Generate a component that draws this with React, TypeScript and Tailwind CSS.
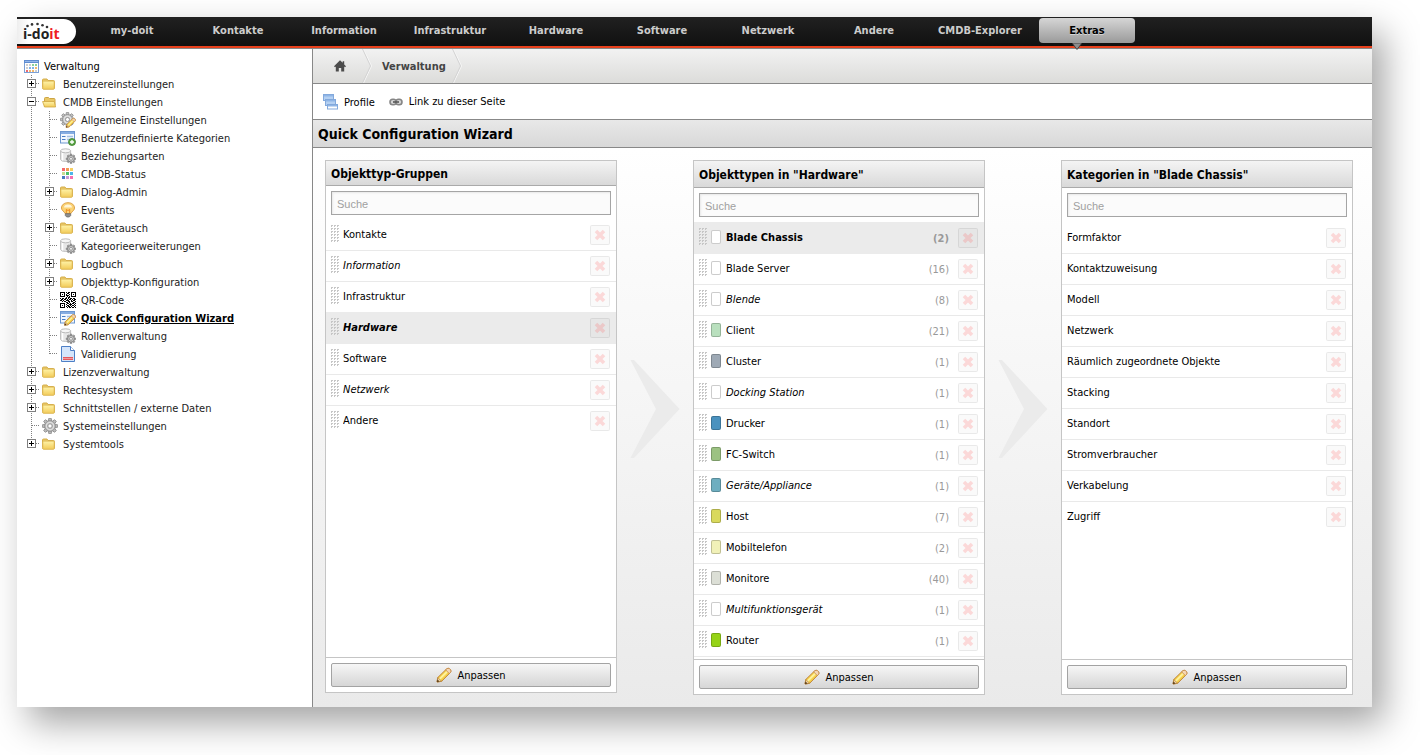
import type { ReactNode } from "react";

const BOX = "block h-4 w-4 shrink-0";

/* ---------- icons ---------- */

function Folder({ open = false }: { open?: boolean }) {
  return (
    <svg viewBox="0 0 16 16" className={BOX} aria-hidden="true">
      <defs>
        <linearGradient id="folderFill" x1="0" y1="0" x2="0" y2="1">
          <stop offset="0" stopColor="#fff3a8" />
          <stop offset="1" stopColor="#f2cb58" />
        </linearGradient>
      </defs>
      {open ? (
        <>
          <path d="M2.500 12.500V4.500q0-1 1-1h3l1 1H12q1 0 1 1v6" fill="#e9c765" stroke="#cda544" />
          <path d="M.6 7.500h11.600l1.400 5.500H2.500z" fill="url(#folderFill)" stroke="#cfa640" strokeWidth=".8" strokeLinejoin="round" />
        </>
      ) : (
        <>
          <path d="M.5 11.500V4q0-1 1-1H5l1 1.500h5.500q1 0 1 1v6.500q0 1-1 1h-10q-1 0-1-1z" fill="#e9c765" stroke="#d5ae4c" />
          <rect x=".9" y="5.200" width="11.200" height="8" rx=".8" fill="url(#folderFill)" stroke="#e0ba58" strokeWidth=".7" />
        </>
      )}
    </svg>
  );
}

function GearShape({ x, y, r, fill = "#b9b9b9", stroke = "#808080" }: { x: number; y: number; r: number; fill?: string; stroke?: string }) {
  const teeth = [0, 45, 90, 135, 180, 225, 270, 315];
  return (
    <g transform={`translate(${x} ${y}) scale(${r / 8})`}>
      {teeth.map((a) => (
        <path key={a} transform={`rotate(${a})`} d="M-1.700-5l.5-2.800h2.400L1.700-5z" fill={fill} stroke={stroke} strokeWidth=".9" />
      ))}
      <circle r="5.400" fill={fill} stroke={stroke} strokeWidth=".8" />
      <circle r="3.700" fill="none" stroke="#fff" strokeOpacity=".5" strokeWidth="1.200" />
      <circle r="2.200" fill="#fff" stroke={stroke} strokeWidth=".9" />
    </g>
  );
}

function PencilShape() {
  return (
    <>
      <path d="M1 15l.8-4.500L10.600 1.900q1.400-1.200 2.800-.3l1.200 1.200q.9 1.400-.3 2.800L5.600 14.300z" fill="#f6d14a" stroke="#b9782c" strokeWidth=".9" strokeLinejoin="round" />
      <path d="M3.600 12.200l8.200-8.200" stroke="#fdf2a0" strokeWidth="1.800" />
      <path d="M10.600 1.900q1.400-1.200 2.800-.3l1.200 1.200q.9 1.400-.3 2.800l-1 1-3.600-3.700z" fill="#f5d6b4" stroke="#c48a4c" strokeWidth=".8" />
      <path d="M1 15l.8-4.500 3.800 3.800z" fill="#f1d2a2" stroke="#a8742a" strokeWidth=".6" />
      <path d="M1 15l.5-2.500 2 2z" fill="#4d3310" />
    </>
  );
}

function Pencil() {
  return (
    <svg viewBox="0 0 16 16" className={BOX} aria-hidden="true">
      <PencilShape />
    </svg>
  );
}

function CalendarIcon() {
  const colors = ["#cfcfcf", "#cfcfcf", "#8bcf9a", "#8bcf9a", "#cfcfcf", "#7db4ea", "#7db4ea", "#f3b76b", "#ec6a72", "#f3b76b", "#f3b76b", "#cfcfcf"];
  return (
    <svg viewBox="0 0 16 16" className={BOX} aria-hidden="true">
      <rect x=".5" y="2.500" width="14" height="12" fill="#fff" stroke="#7ba0d6" />
      <rect x="0" y="2" width="15" height="3" fill="#5f8cd0" />
      <rect x="1" y="3" width="13" height="1" fill="#94b7ea" />
      {colors.map((c, i) => (
        <rect key={i} x={2 + (i % 4) * 3} y={6 + Math.floor(i / 4) * 3} width="2" height="2" fill={c} />
      ))}
    </svg>
  );
}

function GearPencilIcon() {
  return (
    <svg viewBox="0 0 16 16" className={BOX} aria-hidden="true">
      <GearShape x={7.500} y={7.500} r={7.300} fill="#c2c2c2" stroke="#8d8d8d" />
      <g transform="translate(5.500 5.500) scale(.66)">
        <PencilShape />
      </g>
    </svg>
  );
}

function FormShape() {
  return (
    <>
      <rect x=".5" y="1.500" width="14" height="11.500" fill="#f2f7fd" stroke="#6d97cf" />
      <rect x="1" y="2" width="13" height="2" fill="#86ade2" />
      <path d="M2 6.500h3.500M2 9.500h3.500" stroke="#4a7dc4" />
      <path d="M7 6.500h6M7 9.500h6" stroke="#a3bfe4" strokeWidth="1.400" />
    </>
  );
}

function FormAddIcon() {
  return (
    <svg viewBox="0 0 16 16" className={BOX} aria-hidden="true">
      <FormShape />
      <circle cx="12" cy="12" r="3.500" fill="#5aa746" stroke="#3c7f2c" strokeWidth=".8" />
      <path d="M12 10v4M10 12h4" stroke="#fff" strokeWidth="1.300" />
    </svg>
  );
}

function FormEditIcon() {
  return (
    <svg viewBox="0 0 16 16" className={BOX} aria-hidden="true">
      <FormShape />
      <g transform="translate(3.800 3.600) scale(.78)">
        <PencilShape />
      </g>
    </svg>
  );
}

function DatabaseGearIcon() {
  return (
    <svg viewBox="0 0 16 16" className={BOX} aria-hidden="true">
      <path d="M.6 2.800v8.600q0 2 5 2t5-2V2.800z" fill="#e6e6e6" stroke="#b5b5b5" strokeWidth=".9" />
      <path d="M2.500 4.500v8" stroke="#fff" strokeWidth="1.500" />
      <ellipse cx="5.600" cy="2.800" rx="5" ry="2" fill="#f6f6f6" stroke="#b5b5b5" strokeWidth=".9" />
      <GearShape x={11} y={10.800} r={4.900} fill="#a9a9a9" stroke="#737373" />
    </svg>
  );
}

function StatusGridIcon() {
  const colors = ["#f4696b", "#f29a54", "#f5cf62", "#c8dc94", "#4cc06c", "#4cb4ea", "#4a7abf", "#c99ad8", "#f56fb0"];
  return (
    <svg viewBox="0 0 16 16" className={BOX} aria-hidden="true">
      {colors.map((c, i) => (
        <rect key={i} x={2 + (i % 3) * 4} y={2 + Math.floor(i / 3) * 4} width="3" height="3" fill={c} />
      ))}
    </svg>
  );
}

function BulbIcon() {
  return (
    <svg viewBox="0 0 16 16" className={BOX} aria-hidden="true">
      <path d="M8 .7c4 0 6.500 2.300 6.500 5.300 0 2.600-2.800 3.300-3.500 5.500H5C4.300 9.300 1.500 8.600 1.500 6 1.500 3 4 .7 8 .7z" fill="#fbd375" stroke="#d99a3a" strokeWidth=".9" />
      <path d="M4 5.500C4 3.500 5.800 2.500 8 2.500s4 1 4 3z" fill="#fff6d8" />
      <path d="M6.300 11V7.500l1.700 1 1.700-1V11" fill="none" stroke="#f08c1e" />
      <path d="M5.300 11.700h5.400v1.800L9.300 15H6.700l-1.400-1.500z" fill="#8f8f8f" stroke="#666" strokeWidth=".7" />
    </svg>
  );
}

function QrIcon() {
  const rows = [
    "1111101011011111",
    "1000100110010001",
    "1010101001010101",
    "1000101110010001",
    "1111100101011111",
    "0000001011000000",
    "1011011010110110",
    "0110110101101011",
    "1101001110010110",
    "0010110011011001",
    "0000001101000110",
    "1111100110101101",
    "1000101001110010",
    "1010100110101101",
    "1000101011010010",
    "1111100101101101",
  ];
  return (
    <svg viewBox="0 0 16 16" className={BOX} shapeRendering="crispEdges" aria-hidden="true">
      {rows.map((row, y) => row.split("").map((v, x) => (v === "1" ? <rect key={`${x}-${y}`} x={x} y={y} width="1" height="1" fill="#000" /> : null)))}
    </svg>
  );
}

function DocumentIcon() {
  return (
    <svg viewBox="0 0 16 16" className={BOX} aria-hidden="true">
      <path d="M1.500.5h9l4 4v11h-13z" fill="#d5e5fa" stroke="#4d7fc6" />
      <path d="M10.500.5v4h4" fill="#fff" stroke="#4d7fc6" />
      <rect x="3" y="11" width="10" height="3" fill="#f29a9c" />
      <path d="M3 11.500h10M3 13.500h10" stroke="#e3585c" />
    </svg>
  );
}

function GearIcon() {
  return (
    <svg viewBox="0 0 16 16" className={BOX} aria-hidden="true">
      <GearShape x={8} y={8} r={7.900} fill="#bdbdbd" stroke="#8f8f8f" />
    </svg>
  );
}

function WindowsIcon() {
  return (
    <svg viewBox="0 0 16 16" className={BOX} aria-hidden="true">
      {[
        [0, 0],
        [2, 5],
        [4, 10],
      ].map(([x, y], i) => (
        <g key={i} transform={`translate(${x} ${y})`}>
          <rect x=".5" y=".5" width="10" height={i === 2 ? 4.500 : 6} fill={i === 2 ? "#fff" : "#b4d0f2"} stroke="#83a9dc" />
          <rect x="1" y="1" width="9" height="1.500" fill="#8fb5e6" />
        </g>
      ))}
    </svg>
  );
}

function ChainIcon() {
  return (
    <svg viewBox="0 0 14 8" className="block h-2 w-3.5 shrink-0" aria-hidden="true">
      <rect x="1" y="1.200" width="6.200" height="5.600" rx="2.800" fill="#d4d4d4" stroke="#858585" strokeWidth="1.600" />
      <rect x="6.800" y="1.200" width="6.200" height="5.600" rx="2.800" fill="#d4d4d4" stroke="#858585" strokeWidth="1.600" />
      <path d="M4 4h6" stroke="#555" strokeWidth="1.600" />
    </svg>
  );
}

function HomeIcon() {
  return (
    <svg viewBox="0 0 12 12" className="block h-3 w-3" aria-hidden="true">
      <path d="M6 .3L0 6.200l1 1 .8-.7V11.500h3V8h2.400v3.500h3V6.500l.8.7 1-1-1.800-1.800V1.300H8.700v1.500z" fill="#4c4c4c" />
    </svg>
  );
}

function Grip() {
  return (
    <svg viewBox="0 0 8 18" className="mt-[5px] block h-[18px] w-2 shrink-0" shapeRendering="crispEdges" aria-hidden="true">
      {[0, 1, 2, 3, 4, 5].map((r) => [0, 1, 2].map((c) => <path key={`${r}-${c}`} d={`M${c * 3} ${r * 3}h2v1h-1v1h-1z`} fill="#c6c6c6" />))}
    </svg>
  );
}

function CrumbEdge() {
  return (
    <svg viewBox="0 0 10 34" className="block h-[34px] w-2.5 shrink-0" aria-hidden="true">
      <path d="M1.500 0l8 17-8 17" fill="none" stroke="#f6f6f6" />
      <path d="M.5 0l8 17-8 17" fill="none" stroke="#d3d3d3" />
    </svg>
  );
}

function Logo() {
  return (
    <a href="#start" aria-label="i-doit" className="relative mt-0.5 block h-[25px] w-[59px] rounded-r-full bg-linear-to-r from-[#eeeeee] to-white to-20%">
      <svg viewBox="0 0 59 25" className="absolute inset-0 h-full w-full" aria-hidden="true">
        {[
          [10.500, 7],
          [15, 5.400],
          [20.500, 5],
          [25.500, 6.200],
          [30, 8],
        ].map(([x, y]) => (
          <circle key={x} cx={x} cy={y} r="1.300" fill="#333" />
        ))}
      </svg>
      <span className="absolute top-2 left-1.5 font-['Open_Sans',sans-serif] text-sm leading-[14px] font-bold text-[#222]">
        i-do<span className="text-[#ee1c25]">it</span>
      </span>
    </a>
  );
}

/* ---------- header ---------- */

const NAV = ["my-doit", "Kontakte", "Information", "Infrastruktur", "Hardware", "Software", "Netzwerk", "Andere", "CMDB-Explorer", "Extras"];

function TopBar() {
  return (
    <header className="flex h-[31px] items-start gap-2 border-b-2 border-[#e8401c] bg-linear-to-b from-[#212121] to-[#101010]">
      <Logo />
      <nav className="flex gap-2.5 pt-px font-bold">
        {NAV.map((item) =>
          item === "Extras" ? (
            <a key={item} href="#extras" aria-current="page" className="relative ml-px flex h-[25px] w-24 items-center justify-center rounded bg-linear-to-b from-[#d6d6d6] to-[#9a9a9a] pt-px text-black [text-shadow:0_1px_0_#ffffff80]">
              {item}
              <svg viewBox="0 0 10 7" className="absolute top-[25px] left-[33px] h-[7px] w-2.5" aria-hidden="true">
                <path d="M0 0l5 6.500L10 0z" fill="#8d8d8d" stroke="#333" strokeWidth=".8" />
              </svg>
            </a>
          ) : (
            <a key={item} href={`#${item}`} className="flex h-[25px] w-24 items-center justify-center text-[#ccc]">
              {item}
            </a>
          ),
        )}
      </nav>
    </header>
  );
}

/* ---------- tree ---------- */

type Node = { label: string; icon: ReactNode; toggle?: "+" | "-"; active?: boolean; children?: Node[] };

const TREE: Node[] = [
  { label: "Benutzereinstellungen", icon: <Folder />, toggle: "+" },
  {
    label: "CMDB Einstellungen",
    icon: <Folder open />,
    toggle: "-",
    children: [
      { label: "Allgemeine Einstellungen", icon: <GearPencilIcon /> },
      { label: "Benutzerdefinierte Kategorien", icon: <FormAddIcon /> },
      { label: "Beziehungsarten", icon: <DatabaseGearIcon /> },
      { label: "CMDB-Status", icon: <StatusGridIcon /> },
      { label: "Dialog-Admin", icon: <Folder />, toggle: "+" },
      { label: "Events", icon: <BulbIcon /> },
      { label: "Gerätetausch", icon: <Folder />, toggle: "+" },
      { label: "Kategorieerweiterungen", icon: <DatabaseGearIcon /> },
      { label: "Logbuch", icon: <Folder />, toggle: "+" },
      { label: "Objekttyp-Konfiguration", icon: <Folder />, toggle: "+" },
      { label: "QR-Code", icon: <QrIcon /> },
      { label: "Quick Configuration Wizard", icon: <FormEditIcon />, active: true },
      { label: "Rollenverwaltung", icon: <DatabaseGearIcon /> },
      { label: "Validierung", icon: <DocumentIcon /> },
    ],
  },
  { label: "Lizenzverwaltung", icon: <Folder />, toggle: "+" },
  { label: "Rechtesystem", icon: <Folder />, toggle: "+" },
  { label: "Schnittstellen / externe Daten", icon: <Folder />, toggle: "+" },
  { label: "Systemeinstellungen", icon: <GearIcon /> },
  { label: "Systemtools", icon: <Folder />, toggle: "+" },
];

function Branch({ kind, last }: { kind: "node" | "line"; last?: boolean }) {
  return (
    <svg viewBox="0 0 18 18" className="block h-[18px] w-[18px] shrink-0" aria-hidden="true">
      <path d={last ? "M9.500 0V9" : "M9.500 0V18"} stroke="#808080" strokeDasharray="1 1" />
      {kind === "node" && <path d="M10 8.500H18" stroke="#808080" strokeDasharray="1 1" />}
    </svg>
  );
}

function Toggle({ sign, label, last }: { sign: "+" | "-"; label: string; last?: boolean }) {
  return (
    <button type="button" aria-label={label} aria-expanded={sign === "-"} className="block h-[18px] w-[18px] shrink-0">
      <svg viewBox="0 0 18 18" className="block h-[18px] w-[18px]" shapeRendering="crispEdges" aria-hidden="true">
        <path d={last ? "M9.500 0V9" : "M9.500 0V18"} stroke="#808080" strokeDasharray="1 1" />
        <path d="M14 8.500H18" stroke="#808080" strokeDasharray="1 1" />
        <rect x="5.500" y="4.500" width="8" height="8" fill="#fff" stroke="#808080" />
        <path d="M7 8.500h5" stroke="#000" />
        {sign === "+" && <path d="M9.500 6v5" stroke="#000" />}
      </svg>
    </button>
  );
}

function TreeItems({ nodes, nested = false }: { nodes: Node[]; nested?: boolean }) {
  return (
    <ul>
      {nodes.map((n, i) => {
        const last = i === nodes.length - 1;
        return (
          <li key={n.label}>
            <div className="flex h-[18px] items-center whitespace-nowrap">
              {nested && <Branch kind="line" />}
              {n.toggle ? <Toggle sign={n.toggle} label={n.label} last={last} /> : <Branch kind="node" last={last} />}
              <a href={`#${n.label}`} className={n.active ? "flex items-center gap-[5px] pl-0.5 font-bold text-black underline" : "flex items-center gap-[5px] pl-0.5"}>
                {n.icon}
                <span className="pt-0.5">{n.label}</span>
              </a>
            </div>
            {n.children && <TreeItems nodes={n.children} nested />}
          </li>
        );
      })}
    </ul>
  );
}

function Sidebar() {
  return (
    <aside className="w-[296px] shrink-0 border-r border-[#888] bg-white pt-2 pl-[5px] text-[#1c1c1c]">
      <a href="#verwaltung" className="flex h-[18px] items-center gap-1 pl-0.5 text-black">
        <CalendarIcon />
        <span className="pt-0.5">Verwaltung</span>
      </a>
      <TreeItems nodes={TREE} />
    </aside>
  );
}

/* ---------- panels ---------- */

type Item = { name: string; italic?: boolean; selected?: boolean; chip?: string; count?: number };

const GROUPS: Item[] = [
  { name: "Kontakte" },
  { name: "Information", italic: true },
  { name: "Infrastruktur" },
  { name: "Hardware", italic: true, selected: true },
  { name: "Software" },
  { name: "Netzwerk", italic: true },
  { name: "Andere" },
];

const TYPES: Item[] = [
  { name: "Blade Chassis", chip: "#ffffff", count: 2, selected: true },
  { name: "Blade Server", chip: "#ffffff", count: 16 },
  { name: "Blende", chip: "#ffffff", count: 8, italic: true },
  { name: "Client", chip: "#b9e0be", count: 21 },
  { name: "Cluster", chip: "#9ea9b5", count: 1 },
  { name: "Docking Station", chip: "#ffffff", count: 1, italic: true },
  { name: "Drucker", chip: "#4a92bf", count: 1 },
  { name: "FC-Switch", chip: "#9cc282", count: 1 },
  { name: "Geräte/Appliance", chip: "#6eaec0", count: 1, italic: true },
  { name: "Host", chip: "#d9d95c", count: 7 },
  { name: "Mobiltelefon", chip: "#f1f1b8", count: 2 },
  { name: "Monitore", chip: "#dcdfd6", count: 40 },
  { name: "Multifunktionsgerät", chip: "#ffffff", count: 1, italic: true },
  { name: "Router", chip: "#95d316", count: 1 },
];

const CATEGORIES: Item[] = [
  "Formfaktor",
  "Kontaktzuweisung",
  "Modell",
  "Netzwerk",
  "Räumlich zugeordnete Objekte",
  "Stacking",
  "Standort",
  "Stromverbraucher",
  "Verkabelung",
  "Zugriff",
].map((name) => ({ name }));

function Row({ item, grip }: { item: Item; grip: boolean }) {
  return (
    <li
      className={
        item.selected
          ? "relative flex h-[31px] items-start border-b border-[#ebebeb] bg-[#ebebeb] px-[5px] font-bold shadow-[0_-1px_0_#ebebeb]"
          : item.chip
            ? "flex h-[31px] items-start border-b border-[#e9e9e9] px-[5px]"
            : "flex h-[31px] items-start border-b border-[#e9e9e9] px-[5px] last:border-transparent"
      }
    >
      {grip && <Grip />}
      {item.chip && <span className="mt-[7px] ml-1 h-3.5 w-2.5 rounded-xs border border-black/20" style={{ backgroundColor: item.chip }} />}
      <span className={`${item.chip ? "ml-[5px]" : grip ? "ml-1" : ""} ${item.italic ? "italic" : ""} flex-1 truncate leading-[30px]`}>{item.name}</span>
      {item.count !== undefined && <span className="mr-[9px] leading-8 text-[#999]">({item.count})</span>}
      <button type="button" aria-label={`${item.name} entfernen`} className="mt-[5px] mr-px flex h-5 w-5 shrink-0 items-center justify-center rounded-xs border border-black/7 bg-black/2">
        <svg viewBox="0 0 12 12" className="h-3 w-3" aria-hidden="true">
          <path d="M2 2l8 8M10 2l-8 8" stroke="#ff5050" strokeOpacity=".2" strokeWidth="3.600" />
        </svg>
      </button>
    </li>
  );
}

function Panel({ id, title, subject, items, grip }: { id: string; title: string; subject?: string; items: Item[]; grip: boolean }) {
  return (
    <section className="min-w-0 flex-1 border border-[#c5c5c5] bg-white">
      <h2
        className={
          subject
            ? "flex h-[27px] items-center border-b border-[#aaa] bg-linear-to-b from-[#f4f4f4] to-[#d9d9d9] pt-px pl-[5px] text-xs font-bold whitespace-pre"
            : "flex h-[25px] items-center border-b border-[#aaa] bg-linear-to-b from-[#f4f4f4] to-[#d9d9d9] pt-px pl-[5px] text-xs font-bold whitespace-pre"
        }
      >
        {title}
        {subject && ` in "${subject}"`}
      </h2>
      <div className={subject ? "px-[5px] pt-[5px] pb-1.5" : "p-[5px]"}>
        <input
          type="text"
          id={id}
          aria-label={`${title} Suche`}
          placeholder="Suche"
          className="block h-6 w-full border border-[#a5a5a5] bg-[#fbfbfb] px-[5px] pt-0.5 font-['Liberation_Sans',sans-serif] text-[11px] shadow-[inset_1px_1px_2px_#e8e8e8] placeholder:text-[#a0a0a0] placeholder:opacity-100"
        />
      </div>
      <ul className={subject ? "min-h-[436px]" : "min-h-[437px]"}>
        {items.map((it) => (
          <Row key={it.name} item={it} grip={grip} />
        ))}
      </ul>
      <div className="border-t border-[#c5c5c5] p-[5px]">
        <button type="button" className="flex h-6 w-full items-center justify-center gap-[5px] rounded-xs border border-[#a3a3a3] bg-linear-to-b from-[#f6f6f6] to-[#d6d6d6]">
          <Pencil />
          <span className="pt-0.5">Anpassen</span>
        </button>
      </div>
    </section>
  );
}

function Arrow() {
  return (
    <div className="w-[76px] shrink-0 pt-[200px]">
      <svg viewBox="0 0 76 98" className="block w-full" aria-hidden="true">
        <path d="M13.500 0H17L62.500 49 17 98H13.500L39 49z" fill="#ebebeb" />
      </svg>
    </div>
  );
}

function Main() {
  return (
    <main className="flex min-w-0 flex-1 flex-col">
      <nav className="flex h-[35px] items-center border-b border-[#888] bg-linear-to-b from-[#f2f2f2] to-[#dcdcda] pl-5 font-bold text-[#444]">
        <a href="#home" aria-label="Start" className="mr-4 block pl-px">
          <HomeIcon />
        </a>
        <CrumbEdge />
        <a href="#verwaltung" className="pt-px pr-1.5 pl-2.5">
          Verwaltung
        </a>
        <CrumbEdge />
      </nav>
      <div className="flex h-9 items-center border-b border-[#888] bg-white pl-2.5">
        <a href="#profile" className="flex items-center gap-[5px]">
          <WindowsIcon />
          <span className="pt-0.5">Profile</span>
        </a>
        <a href="#link" className="ml-3.5 flex items-center gap-1.5">
          <ChainIcon />
          Link zu dieser Seite
        </a>
      </div>
      <h1 className="flex h-7 items-center border-b border-[#888] bg-linear-to-b from-[#e8e8e8] to-[#d8d8d8] pl-[5px] text-sm font-bold">Quick Configuration Wizard</h1>
      <div className="flex flex-1 items-start bg-linear-to-b from-white to-[#eaeaea] pt-3 pr-[19px] pb-3 pl-3">
        <Panel id="search-groups" title="Objekttyp-Gruppen" items={GROUPS} grip />
        <Arrow />
        <Panel id="search-types" title="Objekttypen" subject="Hardware" items={TYPES} grip />
        <Arrow />
        <Panel id="search-categories" title="Kategorien" subject="Blade Chassis" items={CATEGORIES} grip={false} />
      </div>
    </main>
  );
}

export default function App() {
  return (
    <div className="flex min-h-screen bg-white pt-[17px] pr-12 pb-12 pl-[17px] font-['DejaVu_Sans_Condensed','DejaVu_Sans',sans-serif] text-[11px] leading-[14px] text-black">
      <div className="flex min-w-0 flex-1 flex-col shadow-[12px_16px_34px_rgba(0,0,0,0.36)]">
        <TopBar />
        <div className="flex flex-1 border-t border-[#888] bg-white">
          <Sidebar />
          <Main />
        </div>
      </div>
    </div>
  );
}
